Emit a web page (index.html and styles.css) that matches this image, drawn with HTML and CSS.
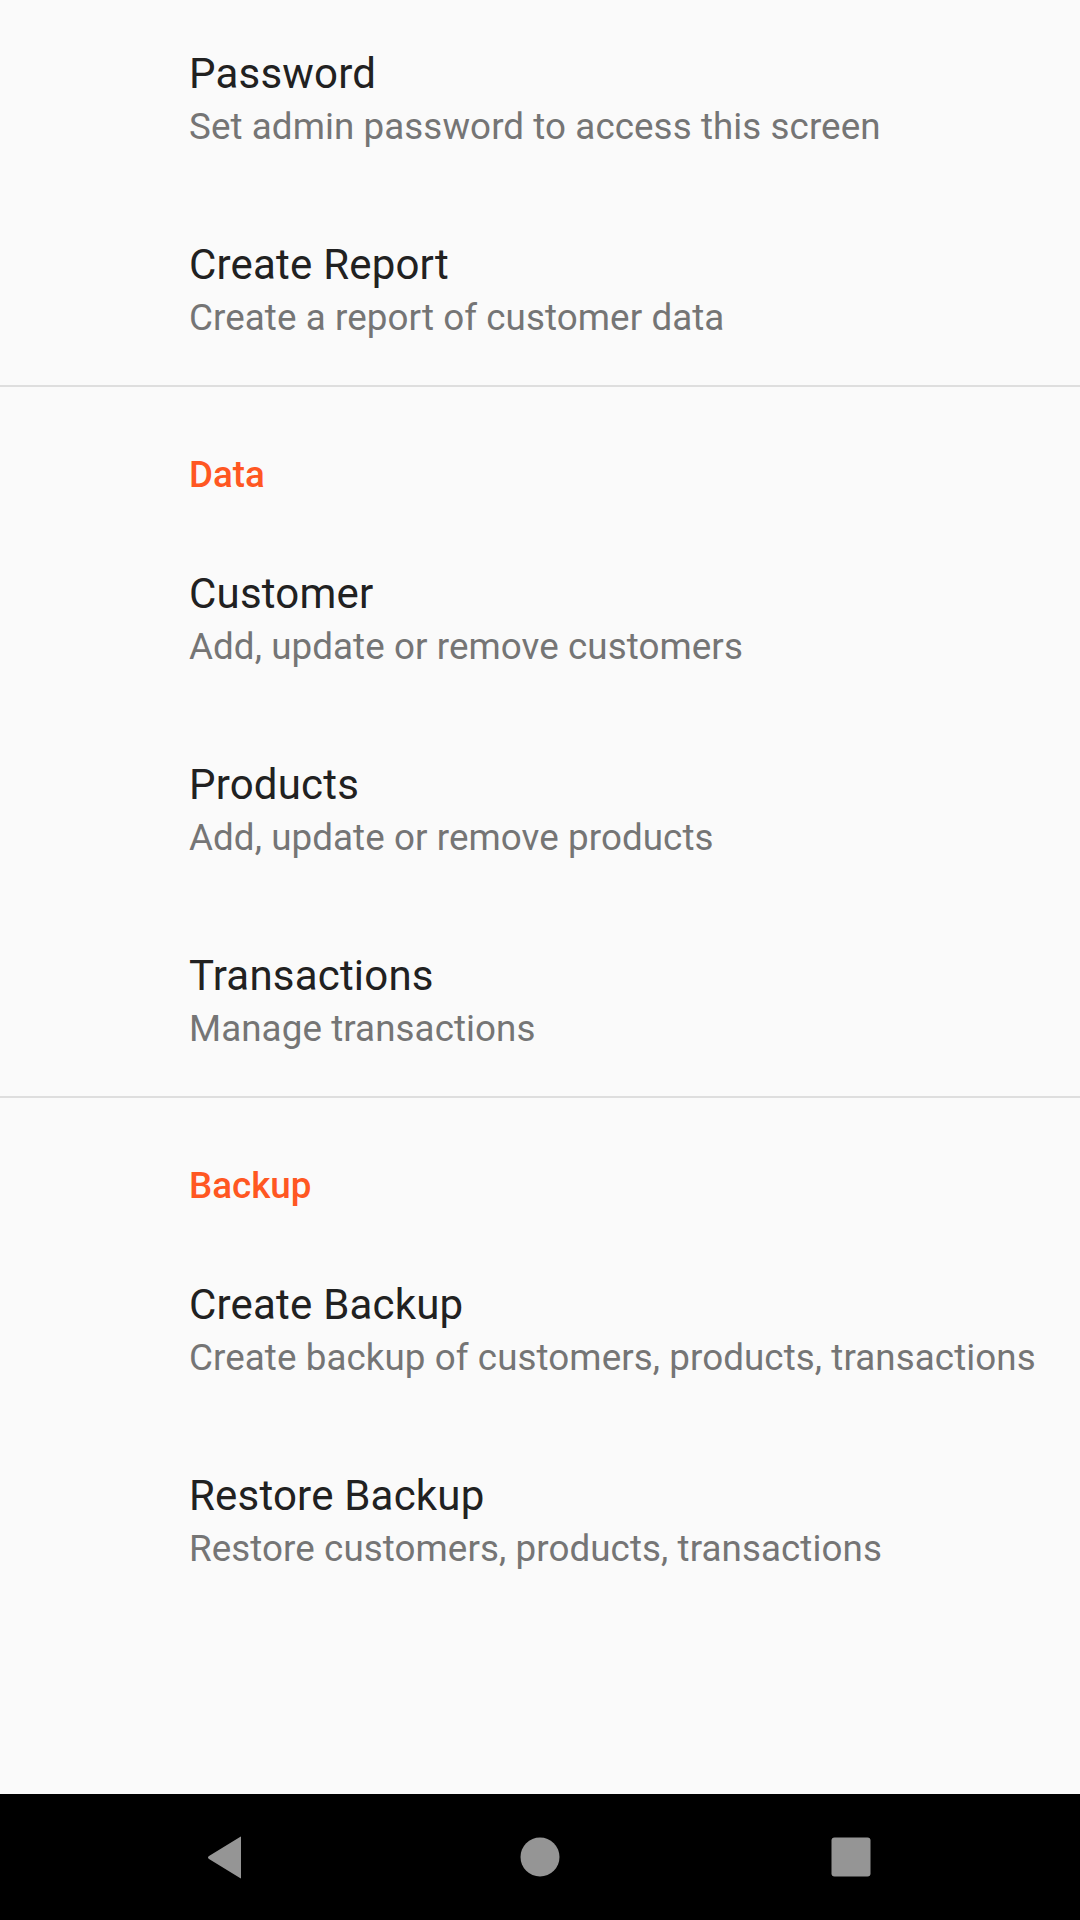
FILE: index.html
```html
<!DOCTYPE html>
<html>
<head>
<meta charset="utf-8">
<link rel="stylesheet" href="styles.css">
</head>
<body>
<div class="screen">
  <main class="list">
    <div class="item first">
      <div class="title">Password</div>
      <div class="summary">Set admin password to access this screen</div>
    </div>
    <div class="item">
      <div class="title">Create Report</div>
      <div class="summary">Create a report of customer data</div>
    </div>
    <div class="divider"></div>
    <div class="category">Data</div>
    <div class="item">
      <div class="title">Customer</div>
      <div class="summary">Add, update or remove customers</div>
    </div>
    <div class="item">
      <div class="title">Products</div>
      <div class="summary">Add, update or remove products</div>
    </div>
    <div class="item">
      <div class="title">Transactions</div>
      <div class="summary">Manage transactions</div>
    </div>
    <div class="divider"></div>
    <div class="category">Backup</div>
    <div class="item">
      <div class="title">Create Backup</div>
      <div class="summary">Create backup of customers, products, transactions</div>
    </div>
    <div class="item">
      <div class="title">Restore Backup</div>
      <div class="summary">Restore customers, products, transactions</div>
    </div>
  </main>
  <nav class="navbar">
    <svg class="nav-back" width="36" height="43" viewBox="0 0 36 43">
      <path d="M34 1.5 L34 41.5 Q34 43 33 42 L2 23 Q0 21.5 2 20 L33 1 Q34 0 34 1.5 Z" fill="#959595"/>
    </svg>
    <svg class="nav-home" width="40" height="40" viewBox="0 0 40 40">
      <circle cx="20" cy="20" r="19.5" fill="#959595"/>
    </svg>
    <svg class="nav-recent" width="40" height="40" viewBox="0 0 40 40">
      <rect x="0.5" y="0.5" width="39" height="39" rx="3" fill="#959595"/>
    </svg>
  </nav>
</div>
</body>
</html>
```

FILE: styles.css
```css
html, body {
  margin: 0;
  padding: 0;
}
body {
  background: #fafafa;
  font-family: Roboto, "Noto Sans", sans-serif;
}
.screen {
  width: 1080px;
  height: 1920px;
  display: flex;
  flex-direction: column;
  background: #fafafa;
}
.list {
  flex: 1;
  padding-top: 5px;
}
.item {
  height: 191px;
  box-sizing: border-box;
  padding: 44px 24px 0 189px;
}
.title {
  font-size: 42px;
  line-height: 50px;
  color: #212121;
  letter-spacing: 0.2px;
  white-space: nowrap;
}
.summary {
  margin-top: 2px;
  font-size: 36.75px;
  line-height: 51px;
  color: #757575;
  letter-spacing: 0.08px;
  white-space: nowrap;
}
.divider {
  height: 2px;
  background: #dedede;
  margin-top: -2px;
  margin-bottom: 2px;
}
.category {
  box-sizing: border-box;
  height: 136px;
  padding: 64px 0 0 189px;
  font-size: 36.75px;
  line-height: 44px;
  font-weight: 500;
  color: #ff5722;
}
.navbar {
  height: 126px;
  background: #000;
  position: relative;
  flex-shrink: 0;
}
.nav-back, .nav-home, .nav-recent {
  position: absolute;
}
.nav-back {
  left: 207px;
  top: 42px;
}
.nav-home {
  left: 520px;
  top: 43px;
}
.nav-recent {
  left: 831px;
  top: 43px;
}
```
